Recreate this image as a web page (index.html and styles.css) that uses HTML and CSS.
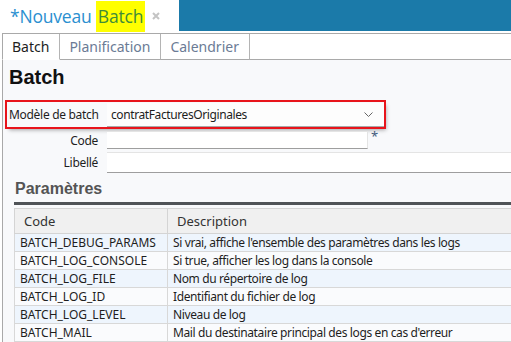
FILE: index.html
```html
<!DOCTYPE html>
<html lang="fr">
<head>
    <meta charset="UTF-8">
    <title>Nouveau Batch</title>
    <link rel="stylesheet" href="styles.css">
</head>
<body>
    <header class="title-bar">
        <div class="doc-tab">
            <span class="doc-title">*Nouveau <mark class="hl">Batch</mark></span>
            <svg class="doc-close" width="8" height="8" viewBox="0 0 8 8"><path d="M1 1 L7 7 M7 1 L1 7" stroke="#c4c4c4" stroke-width="2"/></svg>
        </div>
        <div class="title-fill"></div>
    </header>

    <nav class="tab-bar">
        <span class="tab active">Batch</span>
        <span class="tab">Planification</span>
        <span class="tab">Calendrier</span>
        <span class="tab-rest"></span>
    </nav>

    <main class="panel">
        <h1 class="panel-title">Batch</h1>

        <div class="field-row model-row">
            <label class="field-label">Modèle de batch</label>
            <div class="select">
                <span>contratFacturesOriginales</span>
                <svg class="chevron" width="9" height="5" viewBox="0 0 9 5"><path d="M0.5 0.5 L4.5 4.5 L8.5 0.5" fill="none" stroke="#666" stroke-width="1"/></svg>
            </div>
        </div>
        <div class="field-row">
            <label class="field-label">Code</label>
            <div class="code-wrap">
                <div class="input input-code"></div>
                <span class="required">*</span>
            </div>
        </div>
        <div class="field-row">
            <label class="field-label">Libellé</label>
            <div class="input input-wide"></div>
        </div>

        <section class="params">
            <h2 class="params-title">Paramètres</h2>
            <table class="params-table">
                <thead>
                    <tr><th class="col-code">Code</th><th>Description</th></tr>
                </thead>
                <tbody>
                    <tr><td>BATCH_DEBUG_PARAMS</td><td class="desc">Si vrai, affiche l'ensemble des paramètres dans les logs</td></tr>
                    <tr><td>BATCH_LOG_CONSOLE</td><td class="desc">Si true, afficher les log dans la console</td></tr>
                    <tr><td>BATCH_LOG_FILE</td><td class="desc">Nom du répertoire de log</td></tr>
                    <tr><td>BATCH_LOG_ID</td><td class="desc">Identifiant du fichier de log</td></tr>
                    <tr><td>BATCH_LOG_LEVEL</td><td class="desc">Niveau de log</td></tr>
                    <tr><td>BATCH_MAIL</td><td class="desc">Mail du destinataire principal des logs en cas d'erreur</td></tr>
                </tbody>
            </table>
        </section>
    </main>
</body>
</html>
```

FILE: styles.css
```css
html, body {
    margin: 0;
    height: 100%;
    overflow: hidden;
}

body {
    font-family: "Noto Sans", "Open Sans", sans-serif;
    font-size: 12px;
    color: #1e1e1e;
    background: #fff;
}

/* barre de titre */
.title-bar {
    display: flex;
    height: 31px;
}

.doc-tab {
    display: flex;
    align-items: center;
    width: 179px;
    padding-left: 10px;
    box-sizing: border-box;
}

.doc-title {
    font-family: "Open Sans", sans-serif;
    font-size: 17.5px;
    color: #2a8fd0;
    white-space: nowrap;
    letter-spacing: -0.2px;
}

.hl {
    background: #ffff00;
    color: #3f8c3a;
    padding: 3px 2px 4px;
}

.doc-close {
    margin-left: 7px;
}

.title-fill {
    flex: 1;
    background: #1b7aa9;
}

/* onglets */
.tab-bar {
    display: flex;
    margin-top: 2px;
    margin-left: 2px;
    border-top: 1px solid #a9a9a9;
    height: 26px;
}

.tab {
    display: flex;
    align-items: center;
    padding: 0 10px 0 9px;
    font-size: 14px;
    color: #6b7b95;
    border-right: 1px solid #b4b4b4;
    border-bottom: 1px solid #a9a9a9;
}

.tab:first-child {
    border-left: 1px solid #a9a9a9;
}

.tab.active {
    color: #1e1e1e;
    border-bottom-color: transparent;
}

.tab-rest {
    flex: 1;
    border-bottom: 1px solid #a9a9a9;
}

/* panneau */
.panel {
    margin-left: 2px;
    border-left: 1px solid #a9a9a9;
    background: #f8f9fb;
    padding: 4px 0 0 4px;
    height: 100%;
}

.panel-title {
    margin: 0 0 11px 2px;
    font-family: "Liberation Sans", Arial, sans-serif;
    font-size: 20px;
    font-weight: bold;
    line-height: 27px;
    color: #111;
}

.field-row {
    display: grid;
    grid-template-columns: 91px 1fr;
    column-gap: 9px;
    align-items: center;
}

.field-label {
    text-align: right;
    white-space: nowrap;
    letter-spacing: -0.3px;
}

.model-row {
    width: 377px;
    height: 25px;
    outline: 2px solid #e8141b;
    box-shadow: 2px 3px 4px rgba(0, 0, 0, 0.35);
    margin-bottom: 4px;
}

.model-row .field-label {
    text-align: left;
    padding-left: 2px;
}

.select {
    display: flex;
    align-items: center;
    justify-content: space-between;
    height: 24px;
    padding: 0 11px 0 4px;
    background: #fdfdfd;
    border-bottom: 1px solid #a9a9a9;
    box-sizing: border-box;
    letter-spacing: -0.4px;
}

.code-wrap {
    display: flex;
    align-items: flex-start;
}

.input {
    height: 18px;
    background: #fff;
    border-top: 1px solid #e4e4e4;
    border-bottom: 1px solid #9e9e9e;
    box-sizing: border-box;
}

.input-code {
    width: 261px;
    border-right: 1px solid #e4e4e4;
}

.required {
    margin-left: 3px;
    line-height: 10px;
    font-size: 13px;
    color: #3f5a7c;
}

.field-row + .field-row {
    margin-top: 3px;
}

.input-wide {
    height: 21px;
}

/* paramètres */
.params {
    margin: 5px 0 0 7px;
}

.params-title {
    margin: 0 0 3px;
    font-family: "Liberation Sans", Arial, sans-serif;
    font-size: 16px;
    font-weight: bold;
    line-height: 22px;
    color: #545454;
    padding: 0 0 2px 1px;
    border-bottom: 3px solid #4f5357;
}

.params-table {
    width: 530px;
    border-collapse: collapse;
    border: 1px solid #c4c4c4;
}

.params-table th {
    height: 25px;
    padding: 0 9px;
    text-align: left;
    font-weight: normal;
    font-size: 13px;
    color: #333;
    background: #f0f0f0;
    border: 1px solid #d4d4d4;
    box-sizing: border-box;
}

.params-table .col-code {
    width: 153px;
}

.params-table td {
    height: 18px;
    padding: 0 5px;
    border: 1px solid #d8d8d8;
    white-space: nowrap;
    line-height: 16px;
    box-sizing: border-box;
}

.params-table .desc {
    letter-spacing: -0.38px;
}

.params-table tbody tr:nth-child(odd) {
    background: #eef5fd;
}

.params-table tbody tr:nth-child(even) {
    background: #fafbfd;
}
```
